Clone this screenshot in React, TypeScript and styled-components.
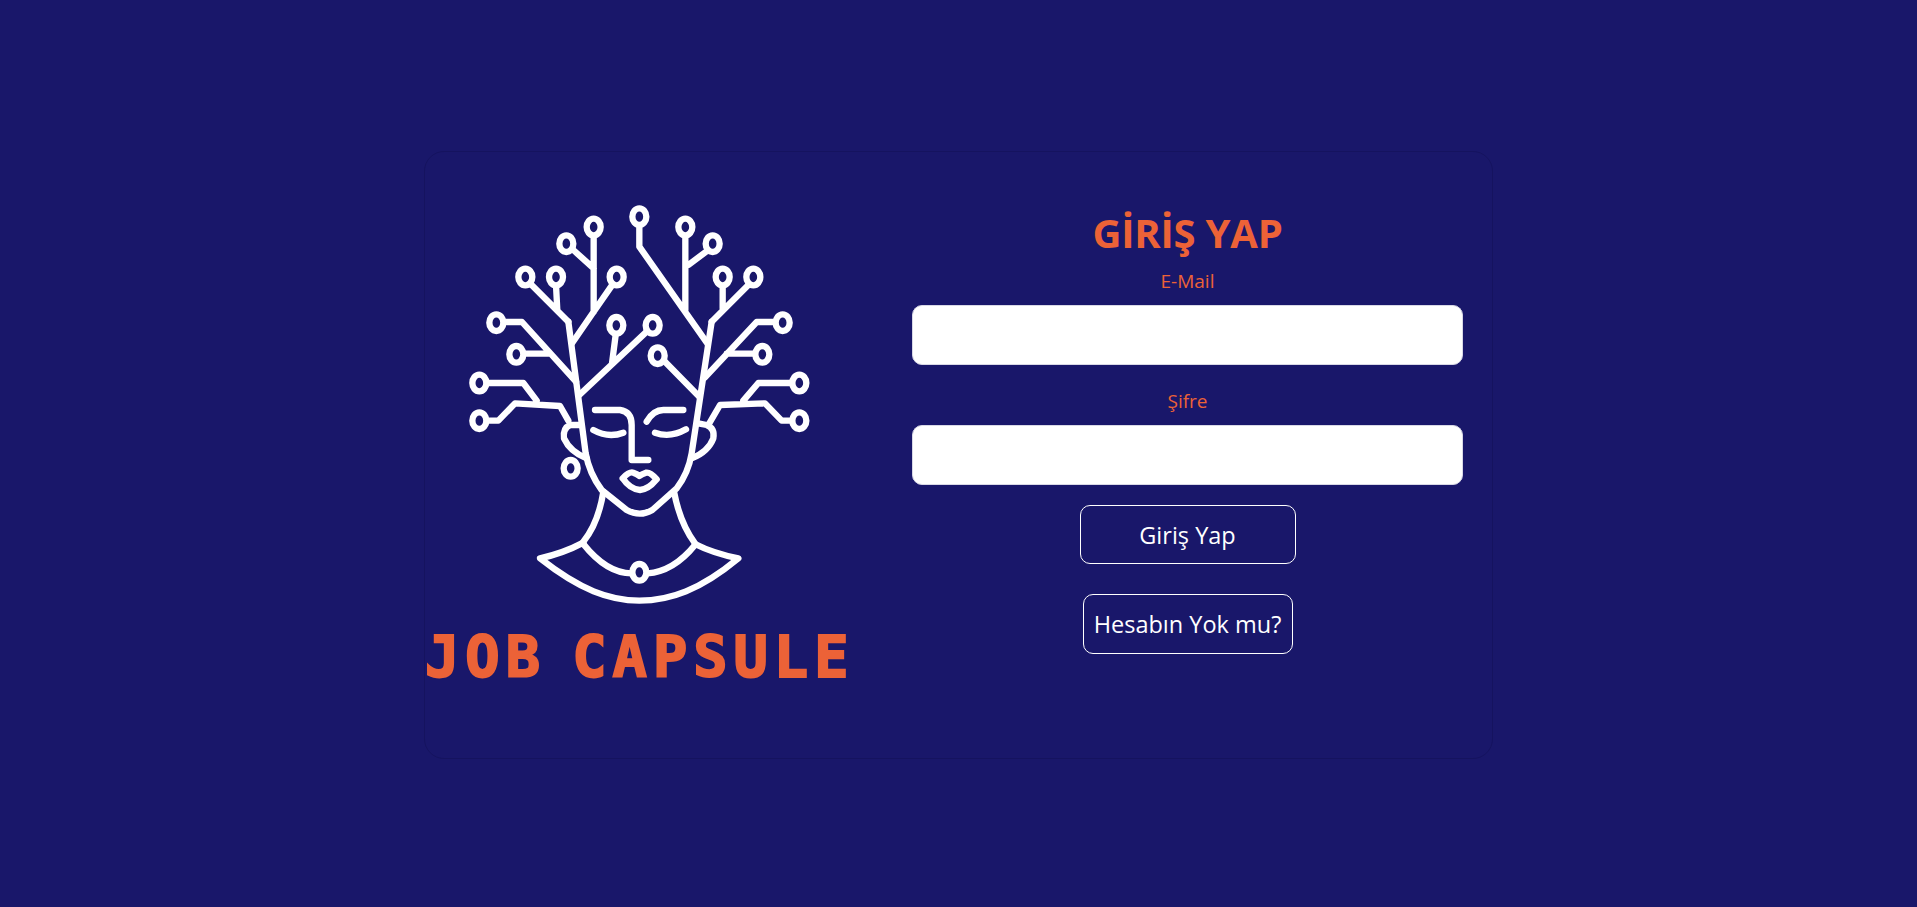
import React from "react";
import styled, { createGlobalStyle } from "styled-components";

const navy = "#19176a";
const orange = "#ec6237";

const GlobalStyle = createGlobalStyle`
  html, body {
    margin: 0;
    padding: 0;
    background: ${navy};
  }
  body {
    font-family: "Open Sans", "Noto Sans", "Liberation Sans", sans-serif;
  }
`;

const Page = styled.main`
  height: 907px;
  box-sizing: border-box;
  padding-top: 151px;
  overflow: hidden;
`;

const Card = styled.section`
  width: 1069px;
  height: 608px;
  margin-left: 424px;
  box-sizing: border-box;
  border: 1px solid #15135f;
  border-radius: 20px;
  display: flex;
  align-items: flex-start;
`;

const Brand = styled.div`
  width: 427px;
  padding-top: 48px;
  display: flex;
  flex-direction: column;
`;

const LogoMark = styled.svg`
  display: block;
  width: 426px;
  height: 420px;
  fill: none;
  stroke: #fff;
  stroke-width: 19;
  stroke-linecap: round;
  stroke-linejoin: round;

  ellipse {
    stroke-width: 19;
  }
`;

const BrandName = styled.div`
  margin-top: 7px;
  font-family: "DejaVu Sans Mono", monospace;
  font-weight: 700;
  font-size: 57px;
  line-height: 60px;
  letter-spacing: 6px;
  word-spacing: -14px;
  -webkit-text-stroke: 2px ${orange};
  color: ${orange};
  white-space: nowrap;
`;

const Form = styled.form`
  width: 551px;
  margin-left: 60px;
  padding-top: 54px;
  display: flex;
  flex-direction: column;
  align-items: center;
`;

const Title = styled.h1`
  margin: 0;
  font-size: 40px;
  line-height: 54px;
  letter-spacing: -0.2px;
  font-weight: 700;
  color: ${orange};
`;

const Label = styled.label<{ $gap: number }>`
  font-size: 19px;
  line-height: 26px;
  margin-top: ${(p) => p.$gap}px;
  margin-bottom: 11px;
  color: ${orange};
`;

const Input = styled.input`
  width: 100%;
  height: 60px;
  box-sizing: border-box;
  border: 1px solid #d8d8e6;
  border-radius: 10px;
  background: #fff;
  outline: none;
`;

const Button = styled.button<{ $width: number; $height: number; $gap: number }>`
  width: ${(p) => p.$width}px;
  height: ${(p) => p.$height}px;
  margin-top: ${(p) => p.$gap}px;
  padding: 0;
  border: 1px solid #fff;
  border-radius: 10px;
  background: transparent;
  color: #fff;
  font-family: inherit;
  font-size: 23.5px;
`;

const nodes: [number, number][] = [
  [658, 80], [521, 111], [439, 161], [796, 111], [878, 161],
  [316, 261], [408, 261], [590, 261], [908, 261], [1000, 261],
  [229, 398], [1088, 398], [589, 406], [698, 406],
  [289, 493], [713, 497], [1027, 493],
  [178, 579], [1138, 579], [178, 692], [1138, 692],
  [452, 835], [658, 1147],
];

const strokes = [
  // face outline
  "M445 395 L497 790 Q508 850 545 900 L620 960 Q660 982 697 960 L770 895 Q805 850 815 790 L875 395",
  // left branches
  "M445 395 L335 285 M412 362 L408 285 M456 460 L521 365 L580 280 M521 365 L521 135 M521 235 L460 180",
  "M255 396 L306 396 L468 575 M318 491 L385 491 M478 615 L680 425 M576 520 L587 435",
  "M205 579 L310 579 L350 632 M205 692 L235 692 L285 640 L420 648 L445 692",
  // right branches
  "M658 105 L658 170 L862 460 M796 135 L796 360 M865 180 L805 225 M985 285 L875 395 M908 285 L908 355",
  "M1060 396 L1010 396 L855 562 M1000 491 L920 491 M735 515 L838 620",
  "M1115 579 L1015 579 L970 632 M1110 692 L1085 692 L1035 640 L900 645 L865 705",
  // ears
  "M478 705 L450 705 Q428 715 432 745 Q450 785 500 805 M835 700 L860 705 Q885 715 880 745 Q865 785 815 805",
  // brows, nose, eyes
  "M525 660 L600 660 Q635 665 635 705 L635 810 L685 810 M680 695 Q700 660 730 660 L790 660",
  "M520 720 Q565 745 610 728 M705 728 Q750 745 798 718",
  // lips
  "M608 865 C620 852 630 845 640 848 Q652 852 658 858 Q666 852 678 848 C688 846 700 856 710 868 M608 865 Q630 898 660 900 Q685 898 708 870",
  // neck and shoulders
  "M550 905 Q535 1000 490 1055 M762 905 Q780 1000 825 1060",
  "M490 1058 Q430 1090 360 1105 C480 1200 570 1232 658 1232 C750 1232 840 1200 955 1105 Q880 1090 825 1062",
  "M490 1062 Q560 1150 635 1150 M682 1150 Q760 1145 825 1065",
];

const Logo = () => (
  <LogoMark viewBox="15 30 1278 1260">
    {strokes.map((d) => (
      <path key={d} d={d} />
    ))}
    {nodes.map(([cx, cy]) => (
      <ellipse key={`${cx}-${cy}`} cx={cx} cy={cy} rx={21} ry={25} fill={navy} />
    ))}
  </LogoMark>
);

export default function App() {
  return (
    <Page>
      <GlobalStyle />
      <Card>
        <Brand>
          <Logo />
          <BrandName>JOB CAPSULE</BrandName>
        </Brand>
        <Form onSubmit={(e) => e.preventDefault()}>
          <Title>GİRİŞ YAP</Title>
          <Label $gap={8}>E-Mail</Label>
          <Input type="email" />
          <Label $gap={23}>Şifre</Label>
          <Input type="password" />
          <Button $width={216} $height={59} $gap={20}>Giriş Yap</Button>
          <Button $width={210} $height={60} $gap={30}>Hesabın Yok mu?</Button>
        </Form>
      </Card>
    </Page>
  );
}
